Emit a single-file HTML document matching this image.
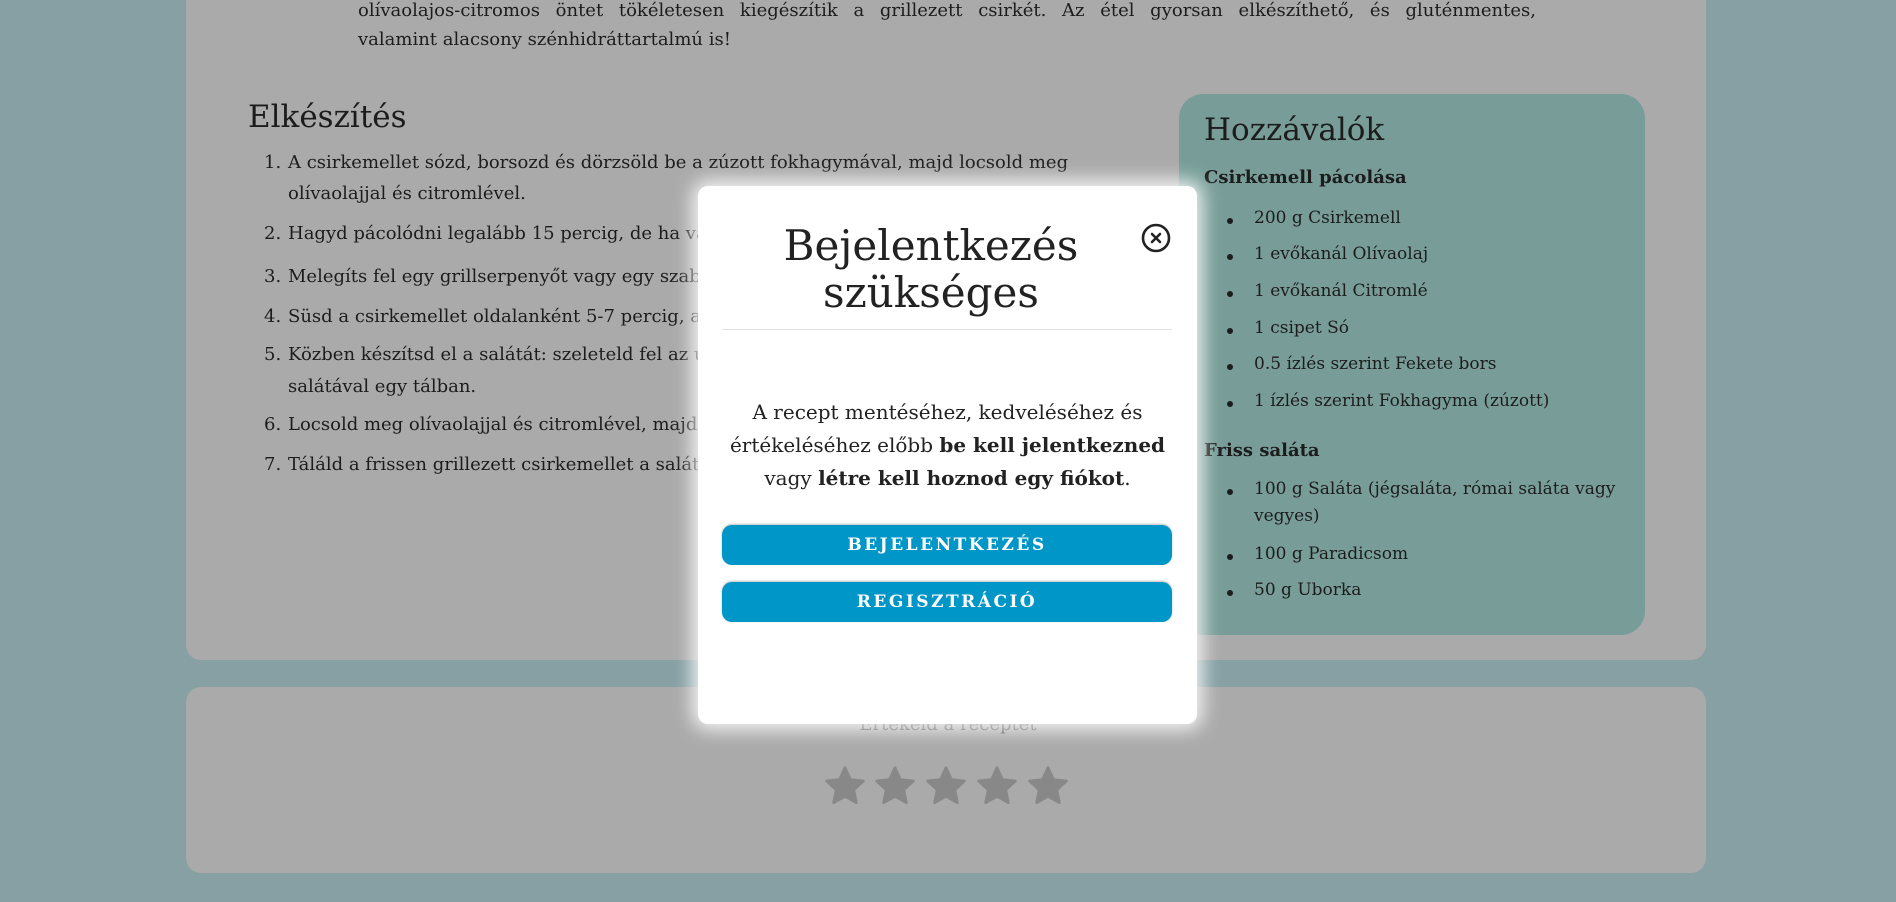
<!DOCTYPE html>
<html><head><meta charset="utf-8"><style>
*{margin:0;padding:0;box-sizing:border-box}
body{width:1896px;height:902px;overflow:hidden;background:#86a0a4;font-family:"DejaVu Serif","Liberation Serif",serif;color:#1c1c1c;position:relative}
.card{position:absolute;left:186px;width:1520px;background:#aaaaaa;border-radius:15px}
.abs{position:absolute;white-space:nowrap}
.intro{left:358px;width:1178px;font-size:18px;line-height:29px}
h2{font-weight:normal;font-size:31px}
.li{font-size:18px;left:264px}
.li span{display:inline-block;width:24px}
.ing{position:absolute;left:1179px;top:94px;width:466px;height:541px;background:#789d98;border-radius:24px}
.ing .it{font-size:17px}
.b{font-weight:bold}
.dot{position:absolute;left:48px;width:6px;height:6px;border-radius:50%;background:#1c1c1c}
.modal{position:absolute;left:698px;top:186px;width:499px;height:538px;background:#fff;border-radius:10px;box-shadow:0 0 18px 6px rgba(255,255,255,.85)}
.btn{position:absolute;left:24px;width:450px;height:40px;background:#0096c8;border-radius:10px;color:#fff;font-weight:bold;font-size:17px;letter-spacing:2.5px;text-align:center;line-height:40px;box-shadow:0 -1px 2px rgba(0,0,0,.25)}
.star{position:absolute;top:764px;width:44px;height:44px}
</style></head><body>
<div class="card" style="top:-20px;height:680px"></div>
<div class="card" style="top:687px;height:186px"></div>

<div class="abs intro" style="top:-4px;text-align:justify;text-align-last:justify;white-space:normal">olívaolajos-citromos öntet tökéletesen kiegészítik a grillezett csirkét. Az étel gyorsan elkészíthető, és gluténmentes,</div>
<div class="abs intro" style="top:25px">valamint alacsony szénhidráttartalmú is!</div>

<h2 class="abs" style="left:248px;top:99px">Elkészítés</h2>
<div class="abs li" style="top:152px"><span>1.</span>A csirkemellet sózd, borsozd és dörzsöld be a zúzott fokhagymával, majd locsold meg</div>
<div class="abs li" style="top:183px"><span></span>olívaolajjal és citromlével.</div>
<div class="abs li" style="top:223px"><span>2.</span>Hagyd pácolódni legalább 15 percig, de ha van időd, akár 1 órára is.</div>
<div class="abs li" style="top:266px"><span>3.</span>Melegíts fel egy grillserpenyőt vagy egy szabadtéri grillt.</div>
<div class="abs li" style="top:306px"><span>4.</span>Süsd a csirkemellet oldalanként 5-7 percig, amíg átsül.</div>
<div class="abs li" style="top:344px"><span>5.</span>Közben készítsd el a salátát: szeleteld fel az uborkát és a paradicsomot, keverd össze a</div>
<div class="abs li" style="top:376px"><span></span>salátával egy tálban.</div>
<div class="abs li" style="top:414px"><span>6.</span>Locsold meg olívaolajjal és citromlével, majd sózd meg.</div>
<div class="abs li" style="top:454px"><span>7.</span>Táláld a frissen grillezett csirkemellet a salátával.</div>

<div class="ing">
<h2 class="abs" style="left:25px;top:18px">Hozzávalók</h2>
<div class="abs b" style="left:25px;top:73px;font-size:18px">Csirkemell pácolása</div>
<div class="dot" style="top:124px"></div><div class="abs it" style="left:75px;top:114px">200 g Csirkemell</div>
<div class="dot" style="top:160px"></div><div class="abs it" style="left:75px;top:150px">1 evőkanál Olívaolaj</div>
<div class="dot" style="top:197px"></div><div class="abs it" style="left:75px;top:187px">1 evőkanál Citromlé</div>
<div class="dot" style="top:234px"></div><div class="abs it" style="left:75px;top:224px">1 csipet Só</div>
<div class="dot" style="top:270px"></div><div class="abs it" style="left:75px;top:260px">0.5 ízlés szerint Fekete bors</div>
<div class="dot" style="top:307px"></div><div class="abs it" style="left:75px;top:297px">1 ízlés szerint Fokhagyma (zúzott)</div>
<div class="abs b" style="left:25px;top:346px;font-size:18px">Friss saláta</div>
<div class="dot" style="top:395px"></div><div class="abs it" style="left:75px;top:385px">100 g Saláta (jégsaláta, római saláta vagy</div>
<div class="abs it" style="left:75px;top:412px">vegyes)</div>
<div class="dot" style="top:460px"></div><div class="abs it" style="left:75px;top:450px">100 g Paradicsom</div>
<div class="dot" style="top:496px"></div><div class="abs it" style="left:75px;top:486px">50 g Uborka</div>
</div>

<div class="abs" style="left:0;width:1896px;text-align:center;top:714px;font-size:18px;color:#555">Értékeld a receptet</div>
<svg class="star" style="left:823px" viewBox="0 0 24 24"><path d="M12 2l3 6.5 7 .8-5.2 4.8 1.4 7L12 17.6 5.8 21.1l1.4-7L2 9.3l7-.8z" fill="#888" stroke="#888" stroke-width="1.5" stroke-linejoin="round"/></svg>
<svg class="star" style="left:873px" viewBox="0 0 24 24"><path d="M12 2l3 6.5 7 .8-5.2 4.8 1.4 7L12 17.6 5.8 21.1l1.4-7L2 9.3l7-.8z" fill="#888" stroke="#888" stroke-width="1.5" stroke-linejoin="round"/></svg>
<svg class="star" style="left:924px" viewBox="0 0 24 24"><path d="M12 2l3 6.5 7 .8-5.2 4.8 1.4 7L12 17.6 5.8 21.1l1.4-7L2 9.3l7-.8z" fill="#888" stroke="#888" stroke-width="1.5" stroke-linejoin="round"/></svg>
<svg class="star" style="left:975px" viewBox="0 0 24 24"><path d="M12 2l3 6.5 7 .8-5.2 4.8 1.4 7L12 17.6 5.8 21.1l1.4-7L2 9.3l7-.8z" fill="#888" stroke="#888" stroke-width="1.5" stroke-linejoin="round"/></svg>
<svg class="star" style="left:1026px" viewBox="0 0 24 24"><path d="M12 2l3 6.5 7 .8-5.2 4.8 1.4 7L12 17.6 5.8 21.1l1.4-7L2 9.3l7-.8z" fill="#888" stroke="#888" stroke-width="1.5" stroke-linejoin="round"/></svg>

<div class="modal">
<div class="abs" style="left:0;width:466px;text-align:center;top:36px;font-size:42px;line-height:47px;color:#222;white-space:normal">Bejelentkezés<br>szükséges</div>
<svg class="abs" style="left:443px;top:37px" width="30" height="30" viewBox="0 0 30 30"><circle cx="15" cy="15" r="13" fill="none" stroke="#222" stroke-width="2.6"/><path d="M11 11l8 8M19 11l-8 8" stroke="#222" stroke-width="2.6" stroke-linecap="round"/></svg>
<div class="abs" style="left:24px;width:450px;top:143px;height:1px;background:#e2e2e2"></div>
<div class="abs" style="left:0;width:499px;text-align:center;top:210px;font-size:20px;line-height:33px;color:#222;white-space:normal">A recept mentéséhez, kedveléséhez és<br>értékeléséhez előbb <b>be kell jelentkezned</b><br>vagy <b>létre kell hoznod egy fiókot</b>.</div>
<div class="btn" style="top:339px">BEJELENTKEZÉS</div>
<div class="btn" style="top:396px">REGISZTRÁCIÓ</div>
</div>
</body></html>
